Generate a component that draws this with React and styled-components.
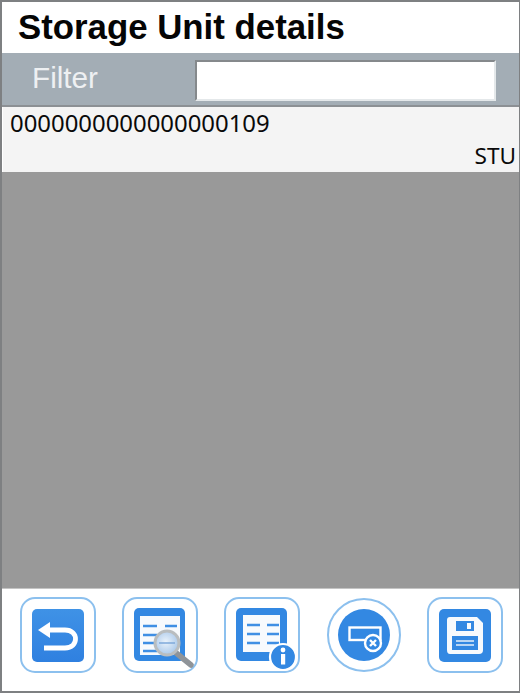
import React from "react";
import styled, { createGlobalStyle } from "styled-components";

const Global = createGlobalStyle`
  html, body { margin: 0; padding: 0; background: #fff; }
  #root { width: 520px; height: 693px; }
`;

const Frame = styled.div`
  box-sizing: border-box;
  width: 520px;
  height: 693px;
  display: flex;
  flex-direction: column;
  border: solid #7e8082;
  border-width: 2px 1px 2px 2px;
  background: #fff;
  overflow: hidden;
`;

const Header = styled.header`
  height: 51px;
  flex: none;
  display: flex;
  align-items: center;
  padding-left: 16px;
  box-sizing: border-box;
`;

const Title = styled.h1`
  margin: 0;
  font: bold 34.8px/1 "Liberation Sans", Arial, sans-serif;
  color: #050505;
`;

const FilterBar = styled.div`
  height: 54px;
  flex: none;
  box-sizing: border-box;
  background: #a3adb5;
  display: flex;
  align-items: center;
  padding: 3px 23px 0 30px;
  border-bottom: 2px solid #8c9094;
`;

const FilterLabel = styled.label`
  width: 163px;
  margin-bottom: 6px;
  font: 29.7px/1 "Liberation Sans", Arial, sans-serif;
  color: #eef0f2;
`;

const FilterInput = styled.input`
  box-sizing: border-box;
  width: 301px;
  height: 41px;
  margin: 0;
  padding: 0;
  background: #fff;
  border: solid 2px;
  border-color: #85898c #e4e8ea #e4e8ea #85898c;
  outline: none;
`;

const ListArea = styled.main`
  flex: 1;
  background: #999999;
`;

const Row = styled.div`
  box-sizing: border-box;
  height: 65px;
  flex: none;
  margin-left: 1px;
  background: #f4f4f4;
  padding: 1px 3px 1px 7px;
  display: flex;
  flex-direction: column;
  justify-content: space-between;
  line-height: 30px;
  font-family: "Noto Sans", Tahoma, sans-serif;
  color: #0a0a0a;
`;

const RowCode = styled.div`
  font-size: 23.9px;
`;

const RowType = styled.div`
  text-align: right;
  font-size: 22.6px;
`;

const Footer = styled.footer`
  height: 103px;
  flex: none;
  box-sizing: border-box;
  background: #fff;
  border-top: 1px solid #c4c4c4;
  display: flex;
  align-items: center;
  gap: 26px;
  padding: 0 0 10px 18px;
`;

const IconButton = styled.button`
  box-sizing: border-box;
  width: 76px;
  height: 76px;
  padding: 0;
  flex: none;
  background: #fff;
  border: 2px solid #8cc0ee;
  border-radius: 15px;
  display: flex;
  align-items: center;
  justify-content: center;
`;

const RoundButton = styled(IconButton)`
  width: 74px;
  height: 74px;
  margin-left: 1px;
  border-radius: 50%;
`;

const Glyph = styled.svg`
  display: block;
  flex: none;
  overflow: visible;
`;

const BackIcon = () => (
  <Glyph width="52" height="53" viewBox="0 0 52 53">
    <defs>
      <linearGradient id="blueFill" x1="0" y1="0" x2="0" y2="1">
        <stop offset="0" stopColor="#3f92e6" />
        <stop offset="1" stopColor="#2f80e0" />
      </linearGradient>
    </defs>
    <rect width="52" height="53" rx="5" fill="url(#blueFill)" />
    <path d="M6 21 L18 13 V29 Z" fill="#fff" />
    <path d="M16 21 H33 C47 21 47 39 33 39 H12" fill="none" stroke="#fff" strokeWidth="4.8" />
  </Glyph>
);

const SearchIcon = () => (
  <Glyph width="72" height="72" viewBox="0 0 72 72">
    <defs>
      <radialGradient id="lens2" cx="0.45" cy="0.45" r="0.6">
        <stop offset="0" stopColor="#e9f2fb" />
        <stop offset="1" stopColor="#a5c5e8" />
      </radialGradient>
    </defs>
    <rect x="10" y="9" width="51" height="53" rx="5" fill="#3388e2" />
    <rect x="16" y="17" width="40" height="39" fill="#f7fafd" />
    <path d="M19 27h14M41 27h12M19 36h14M19 44h14M19 52h14" stroke="#3f8fe4" strokeWidth="2.4" />
    <path d="M51 53 L67 66" stroke="#8f9499" strokeWidth="5.5" strokeLinecap="round" />
    <circle cx="43" cy="44" r="12" fill="url(#lens2)" stroke="#b9bdbf" strokeWidth="3" />
    <path d="M35 44h16" stroke="#7ea9da" strokeWidth="1.5" />
  </Glyph>
);

const InfoIcon = () => (
  <Glyph width="72" height="72" viewBox="0 0 72 72">
    <rect x="10" y="9" width="51" height="53" rx="5" fill="#3388e2" />
    <rect x="17" y="16" width="37" height="37" fill="#f7fafd" />
    <path d="M21 26h13M41 26h12M21 35h13M41 35h12M21 44h13M41 44h12" stroke="#3f8fe4" strokeWidth="2.4" />
    <circle cx="57" cy="58" r="13" fill="#3388e2" stroke="#fff" strokeWidth="2.2" />
    <circle cx="57" cy="51" r="2.4" fill="#fff" />
    <rect x="55" y="55" width="4.2" height="10.5" fill="#fff" />
  </Glyph>
);

const ClearIcon = () => (
  <Glyph width="52" height="52" viewBox="0 0 52 52">
    <circle cx="26" cy="26" r="26" fill="#3388e2" />
    <rect x="11.5" y="18.5" width="31" height="12.5" fill="none" stroke="#fff" strokeWidth="2.4" />
    <circle cx="35" cy="34" r="8" fill="#3388e2" stroke="#fff" strokeWidth="2.4" />
    <path d="M32 31l6 6M38 31l-6 6" stroke="#fff" strokeWidth="2.4" />
  </Glyph>
);

const SaveIcon = () => (
  <Glyph width="52" height="53" viewBox="0 0 52 53">
    <rect width="52" height="53" rx="5" fill="#3388e2" />
    <path d="M11 8 H38 L44 14 V41 Q44 45 40 45 H11 Q8 45 8 41 V11 Q8 8 11 8 Z" fill="#f7fafd" />
    <rect x="17" y="12" width="18" height="10" fill="#3388e2" />
    <rect x="28" y="14" width="4" height="6" fill="#f7fafd" />
    <rect x="13" y="27" width="26" height="14" fill="#3388e2" />
    <path d="M17 32h18M17 36h18" stroke="#e6f0fa" strokeWidth="1.6" />
  </Glyph>
);

export default function App() {
  return (
    <>
      <Global />
      <Frame>
        <Header>
          <Title>Storage Unit details</Title>
        </Header>
        <FilterBar>
          <FilterLabel>Filter</FilterLabel>
          <FilterInput aria-label="Filter" />
        </FilterBar>
        <Row>
          <RowCode>0000000000000000109</RowCode>
          <RowType>STU</RowType>
        </Row>
        <ListArea />
        <Footer>
          <IconButton aria-label="Back"><BackIcon /></IconButton>
          <IconButton aria-label="Search"><SearchIcon /></IconButton>
          <IconButton aria-label="Info"><InfoIcon /></IconButton>
          <RoundButton aria-label="Clear"><ClearIcon /></RoundButton>
          <IconButton aria-label="Save"><SaveIcon /></IconButton>
        </Footer>
      </Frame>
    </>
  );
}
